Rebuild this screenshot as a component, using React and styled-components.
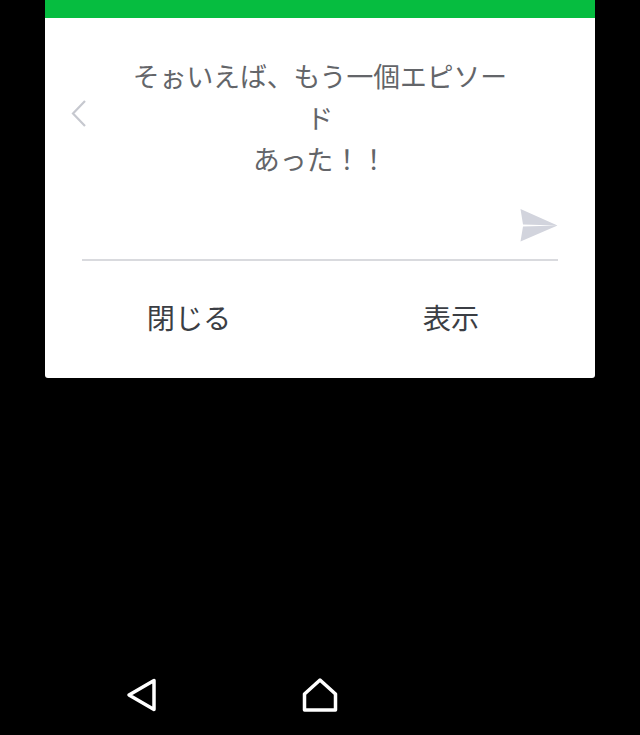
import React from 'react';
import styled, { createGlobalStyle } from 'styled-components';

const GlobalStyle = createGlobalStyle`
  html, body {
    margin: 0;
    padding: 0;
    background: #000;
  }
  body {
    font-family: "Noto Sans CJK JP", "Noto Sans", sans-serif;
  }
`;

const Screen = styled.div`
  width: 640px;
  height: 735px;
  display: flex;
  flex-direction: column;
  justify-content: space-between;
  align-items: center;
  overflow: hidden;
  background: #000;
`;

const Dialog = styled.div`
  width: 550px;
  height: 378px;
  background: #fff;
  border-radius: 0 0 3px 3px;
  overflow: hidden;
`;

const GreenBar = styled.div`
  height: 18px;
  background: #06bd40;
`;

const MessageRow = styled.div`
  display: grid;
  grid-template-columns: 80px 390px 80px;
  padding-top: 37px;
`;

const PrevButton = styled.div`
  padding: 45px 0 0 26px;
  line-height: 0;
`;

const Message = styled.div`
  font-size: 26.8px;
  line-height: 41.5px;
  color: #636569;
  text-align: center;
`;

const InputRow = styled.div`
  display: flex;
  justify-content: flex-end;
  align-items: flex-start;
  height: 81px;
  margin: 0 37px;
  padding-top: 29px;
  box-sizing: border-box;
  border-bottom: 2px solid #d9dade;
`;

const SendIcon = styled.svg`
  display: block;
  width: 38px;
  height: 33px;
`;

const Actions = styled.div`
  display: grid;
  grid-template-columns: 262px 262px;
  padding: 28px 13px 0;
`;

const ActionButton = styled.div`
  font-size: 28.2px;
  line-height: 56px;
  color: #3b3e44;
  text-align: center;
`;

const NavBar = styled.div`
  display: grid;
  grid-template-columns: repeat(3, 178px);
  justify-items: center;
  align-items: center;
  height: 34px;
  padding-bottom: 23px;
`;

const NavIcon = styled.svg`
  display: block;
  fill: none;
  stroke: #fff;
  stroke-width: 3.5;
  stroke-linejoin: round;
`;

export default function App() {
  return (
    <Screen>
      <GlobalStyle />
      <Dialog>
        <GreenBar />
        <MessageRow>
          <PrevButton>
            <svg width="15" height="27" viewBox="0 0 15 27" fill="none" stroke="#c6c8cf" strokeWidth="2.2">
              <path d="M14 1 L2 13.5 L14 26" />
            </svg>
          </PrevButton>
          <Message>
            そぉいえば、もう一個エピソード
            <br />
            あった！！
          </Message>
        </MessageRow>
        <InputRow>
          <SendIcon viewBox="0 0 38 33">
            <path d="M0.5 0 L37.5 16.5 L3 15.6 Z M37.5 16.5 L0.5 32.5 L3 17.4 Z" fill="#d2d4dd" />
          </SendIcon>
        </InputRow>
        <Actions>
          <ActionButton>閉じる</ActionButton>
          <ActionButton>表示</ActionButton>
        </Actions>
      </Dialog>
      <NavBar>
        <NavIcon width="32" height="34" viewBox="0 0 32 34">
          <path d="M28 2.5 V31.5 L3 17 Z" />
        </NavIcon>
        <NavIcon width="36" height="34" viewBox="0 0 36 34">
          <path d="M2.5 16 L18 2 L33.5 16 V32 H2.5 Z" />
        </NavIcon>
        <div />
      </NavBar>
    </Screen>
  );
}
